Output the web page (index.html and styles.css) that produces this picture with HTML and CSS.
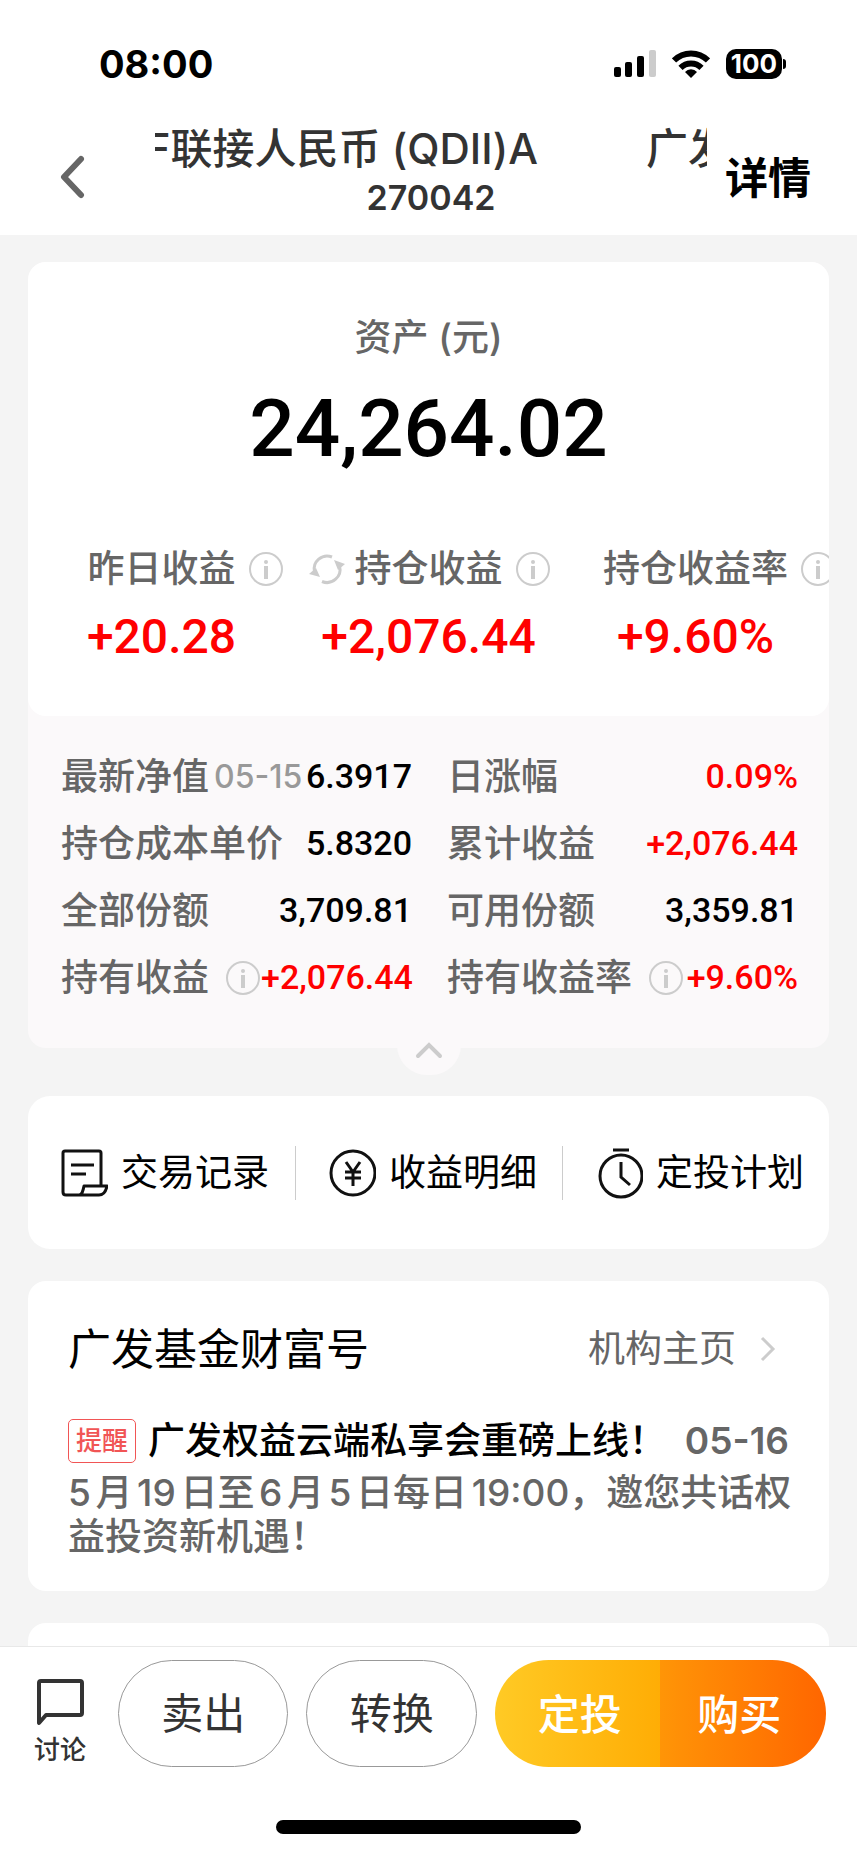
FILE: index.html
```html
<!DOCTYPE html>
<html lang="zh-CN">
<head>
<meta charset="utf-8">
<meta name="viewport" content="width=device-width, initial-scale=1">
<title>基金详情 270042</title>
<link rel="stylesheet" href="styles.css">
</head>
<body>
<svg class="defs" width="0" height="0" aria-hidden="true">
  <symbol id="info" viewBox="0 0 36 36">
    <circle cx="18" cy="18" r="16" fill="none" stroke="#ccc" stroke-width="2"/>
    <circle cx="18" cy="11" r="2" fill="#ccc"/>
    <path d="M18 15v13" stroke="#ccc" stroke-width="4"/>
  </symbol>
</svg>
<div class="app">
  <header class="top">
    <div class="status">
      <span class="time">08:00</span>
      <div class="signals">
        <svg width="42" height="28" viewBox="0 0 42 28" aria-hidden="true">
          <rect x="0" y="17" width="7" height="10" rx="2"/>
          <rect x="11" y="12" width="7" height="15" rx="2"/>
          <rect x="23" y="6" width="7" height="21" rx="2"/>
          <rect x="35" y="0" width="7" height="27" rx="2" fill="#ccc"/>
        </svg>
        <svg width="38" height="28" viewBox="0 0 38 28" aria-hidden="true" fill="none" stroke="#000" stroke-width="6">
          <path d="M2 10.500a24 24 0 0 1 34 0"/>
          <path d="M8.500 17.800a15 15 0 0 1 21 0"/>
          <path d="M19 28l-6-6a8 8 0 0 1 12 0z" fill="#000" stroke="none"/>
        </svg>
        <div class="battery"><span class="level">100</span><span class="tip"></span></div>
      </div>
    </div>
    <div class="nav">
      <button class="back" aria-label="返回">
        <svg width="26" height="44" viewBox="0 0 26 44" fill="none" stroke="#666" stroke-width="6" stroke-linecap="round" stroke-linejoin="round"><path d="M21 4L4 22l17 18"/></svg>
      </button>
      <div class="heading">
        <div class="marquee">
          <h1 class="name">F联接人民币 (QDII)A</h1>
          <span class="repeat" aria-hidden="true">广发</span>
        </div>
        <div class="code">270042</div>
      </div>
      <button class="more">详情</button>
    </div>
  </header>

  <main class="content">
    <section class="asset">
      <div class="summary">
        <div class="caption">资产 (元)</div>
        <div class="total">24,264.02</div>
        <div class="metrics">
          <div class="metric">
            <div class="metric-label"><span class="lead"></span>昨日收益<svg class="info trail"><use href="#info"/></svg></div>
            <div class="metric-value">+20.28</div>
          </div>
          <div class="metric">
            <div class="metric-label">
              <svg class="info lead" viewBox="0 0 36 36" fill="none" stroke="#ccc" stroke-width="3">
                <path d="M5.500 21A13 13 0 0 1 23 6"/><path d="M30.500 15A13 13 0 0 1 13 30.500"/>
                <path d="M0 23l11 3-4-9zM36 13l-11-4 4 10z" fill="#ccc" stroke="none"/>
              </svg>持仓收益<svg class="info trail"><use href="#info"/></svg></div>
            <div class="metric-value">+2,076.44</div>
          </div>
          <div class="metric">
            <div class="metric-label"><span class="lead"></span>持仓收益率<svg class="info trail"><use href="#info"/></svg></div>
            <div class="metric-value">+9.60%</div>
          </div>
        </div>
      </div>
      <dl class="details">
        <div class="row"><dt>最新净值<span class="date">05-15</span></dt><dd>6.3917</dd></div>
        <div class="row"><dt>日涨幅</dt><dd class="up">0.09%</dd></div>
        <div class="row"><dt>持仓成本单价</dt><dd>5.8320</dd></div>
        <div class="row"><dt>累计收益</dt><dd class="up">+2,076.44</dd></div>
        <div class="row"><dt>全部份额</dt><dd>3,709.81</dd></div>
        <div class="row"><dt>可用份额</dt><dd>3,359.81</dd></div>
        <div class="row"><dt>持有收益<svg class="info gap"><use href="#info"/></svg></dt><dd class="up">+2,076.44</dd></div>
        <div class="row"><dt>持有收益率<svg class="info gap"><use href="#info"/></svg></dt><dd class="up">+9.60%</dd></div>
      </dl>
      <button class="fold" aria-label="收起">
        <svg width="28" height="18" viewBox="0 0 28 18" fill="none" stroke="#ccc" stroke-width="4" stroke-linecap="round"><path d="M3 15L14 4l11 11"/></svg>
      </button>
    </section>

    <nav class="links">
      <a class="link" href="#records">
        <svg width="48" height="50" viewBox="0 0 48 50" fill="none" stroke="#111" stroke-width="3" stroke-linejoin="round">
          <path d="M41 38V5q0-2-2-2H5Q3 3 3 5v39q0 3 3 3h33c5 0 7-4 8-9H24c-1 5-2 9-5 9"/>
          <path d="M11 17h23M11 26h15"/>
        </svg>交易记录</a>
      <a class="link" href="#income">
        <svg width="48" height="50" viewBox="-1 0 48 50" fill="none" stroke="#111" stroke-width="3">
          <circle cx="24" cy="25" r="22"/>
          <path d="M17 14l7 10 7-10M24 24v14M16 24h16M16 30h16"/>
        </svg>收益明细</a>
      <a class="link" href="#plan">
        <svg width="48" height="52" viewBox="-2 0 48 52" fill="none" stroke="#111" stroke-width="3">
          <circle cx="24" cy="29" r="21"/><path d="M16 3h16M24 15v15l9 8"/>
        </svg>定投计划</a>
    </nav>

    <section class="news">
      <div class="news-head">
        <h2 class="news-title">广发基金财富号</h2>
        <a class="home" href="#home">机构主页
          <svg width="16" height="26" viewBox="0 0 16 26" fill="none" stroke="#ccc" stroke-width="3"><path d="M2 2l11 11L2 24"/></svg>
        </a>
      </div>
      <div class="post">
        <span class="tag">提醒</span>
        <strong class="post-title">广发权益云端私享会重磅上线！</strong>
        <time class="post-date">05-16</time>
      </div>
      <p class="post-body">5月19日至6月5日每日19:00，邀您共话权益投资新机遇！</p>
    </section>
    <section class="next"></section>
  </main>

  <footer class="bar">
    <div class="actions">
      <button class="discuss">
        <svg width="48" height="48" viewBox="0 0 48 48" fill="none" stroke="#333" stroke-width="4" stroke-linejoin="round"><path d="M3 45V5q0-2 2-2h39q2 0 2 2v30q0 2-2 2H10z"/></svg>
        讨论
      </button>
      <button class="ghost">卖出</button>
      <button class="ghost">转换</button>
      <div class="pair">
        <button class="invest">定投</button>
        <button class="buy">购买</button>
      </div>
    </div>
    <div class="indicator"></div>
  </footer>
</div>
</body>
</html>
```
FILE: styles.css
```css
* { box-sizing: border-box; }
body {
  margin: 0;
  background: #f4f4f4;
  color: #000;
  font-family: Inter, "Noto Sans CJK SC", sans-serif;
  font-size: 37px;
  line-height: 44px;
}
button {
  margin: 0; padding: 0; border: 0;
  background: none; color: inherit; font: inherit;
}
a { color: inherit; text-decoration: none; }
h1, h2, p, dl, dd { margin: 0; }
svg { display: block; flex: none; }
.defs { position: absolute; }
.app { display: flex; flex-direction: column; min-height: 100vh; overflow: hidden; }

.top { background: #fff; padding: 40px 46px 0 48px; height: 235px; }
.status {
  display: flex; justify-content: space-between; align-items: center;
  height: 48px; padding: 0 25px 0 51px;
}
.time { font-size: 38px; font-weight: 700; }
.signals { display: flex; align-items: center; gap: 16px; }
.battery { display: flex; align-items: center; gap: 1px; }
.level {
  width: 56px; border-radius: 10px; background: #000; color: #fff;
  font-size: 26px; font-weight: 700; line-height: 30px; text-align: center;
}
.tip { width: 3px; height: 10px; border-radius: 0 3px 3px 0; background: #000; }

.nav { display: flex; align-items: center; padding-top: 37px; }
.back { width: 107px; padding: 6px 0 0 12px; }
.heading { flex: 1; min-width: 0; color: #333; font-weight: 500; }
.marquee { display: flex; gap: 108px; overflow: hidden; font-size: 42px; line-height: 48px; white-space: nowrap; }
.name {
  display: flex; justify-content: flex-end; flex: none;
  width: 383px; overflow: hidden; font-size: 42px; font-weight: 500;
}
.code { font-size: 34px; font-weight: 600; line-height: 50px; text-align: center; }
.more { padding: 8px 0 0 18px; font-size: 43px; font-weight: 700; }

.content { flex: 1; display: flex; flex-direction: column; padding: 27px 28px 0; }
.asset { position: relative; border-radius: 18px; background: #fbf9fa; }
.summary { height: 454px; padding-top: 54px; border-radius: 18px; background: #fff; overflow: hidden; }
.caption { color: #666; font-weight: 500; text-align: center; }
.total {
  margin-top: 21px;
  font-family: Roboto, sans-serif; font-size: 80px; font-weight: 500; line-height: 96px; text-align: center;
}
.metrics { display: grid; grid-template-columns: repeat(3, minmax(0, 1fr)); margin-top: 70px; }
.metric-label {
  display: grid; grid-template-columns: minmax(0, 1fr) auto minmax(0, 1fr); align-items: center;
  color: #666; font-weight: 500; white-space: nowrap;
}
.info { width: 36px; height: 36px; }
.lead { justify-self: end; margin-right: 10px; }
.trail { margin-left: 12px; }
.metric-value {
  margin-top: 18px; color: #f00; text-align: center;
  font-family: Roboto, sans-serif; font-size: 48px; font-weight: 500; line-height: 56px;
}
.details {
  display: grid; grid-template-columns: repeat(2, minmax(0, 1fr));
  column-gap: 35px; padding: 26px 31px 38px 33px;
}
.row { display: flex; justify-content: space-between; align-items: center; height: 67px; white-space: nowrap; }
dt { display: flex; align-items: center; padding-top: 2px; color: #666; font-weight: 500; }
dd { font-family: Roboto, sans-serif; font-size: 34px; font-weight: 500; }
.date { margin-left: 5px; color: #999; font-size: 32px; }
.gap { margin-left: 16px; }
.up { color: #f00; }
.fold {
  position: absolute; left: 50%; bottom: -27px;
  display: flex; align-items: center; justify-content: center;
  width: 64px; height: 60px; margin-left: -32px; padding-top: 10px; border-radius: 32px; background: #fbf9fa;
}

.links {
  display: grid; grid-template-columns: repeat(3, minmax(0, 1fr)); align-items: center;
  height: 153px; margin-top: 48px; border-radius: 22px; background: #fff;
}
.link { display: flex; align-items: center; gap: 13px; height: 54px; padding-left: 32px; white-space: nowrap; }
.link + .link { border-left: 1px solid #ccc; }

.news { margin-top: 32px; padding: 46px 40px 32px; border-radius: 18px; background: #fff; }
.news-head { display: flex; align-items: center; justify-content: space-between; padding-right: 13px; }
.news-title { font-size: 43px; font-weight: 400; }
.home { display: flex; align-items: center; gap: 24px; color: #666; }
.post { display: flex; align-items: center; margin-top: 48px; white-space: nowrap; }
.tag {
  padding: 0 7px; border: 1px solid #f15555; border-radius: 5px;
  color: #f15555; font-size: 26px; font-weight: 500; line-height: 42px;
}
.post-title { margin-left: 12px; font-weight: 500; }
.post-date { margin-left: auto; color: #666; font-weight: 600; }
.post-body { margin: 8px -8px 0 0; color: #666; font-weight: 500; text-autospace: normal; }
.next { flex: 1; min-height: 23px; margin-top: 32px; border-radius: 18px 18px 0 0; background: #fff; }

.bar { height: 210px; padding-top: 13px; border-top: 1px solid #e8e8e8; background: #fff; }
.actions { display: flex; align-items: stretch; height: 107px; padding: 0 31px 0 34px; gap: 18px; }
.discuss {
  display: flex; flex-direction: column; align-items: center; justify-content: center; gap: 8px;
  width: 52px; margin-right: 14px; padding-top: 16px; color: #333; font-size: 26px; font-weight: 500; line-height: 32px; white-space: nowrap;
}
.ghost { flex: 170; border: 1px solid #999; border-radius: 54px; color: #333; font-size: 42px; }
.pair { flex: 334; display: grid; grid-template-columns: 1fr 1fr; border-radius: 54px; overflow: hidden; color: #fff; }
.invest, .buy { padding-top: 3px; font-size: 42px; font-weight: 500; }
.invest { padding-left: 4px; background: linear-gradient(90deg, #ffca25, #ffad05); }
.buy { padding-right: 8px; background: linear-gradient(90deg, #ff9507, #ff6600); }
.indicator { width: 305px; height: 14px; margin: 53px auto 0; border-radius: 7px; background: #000; }
```
